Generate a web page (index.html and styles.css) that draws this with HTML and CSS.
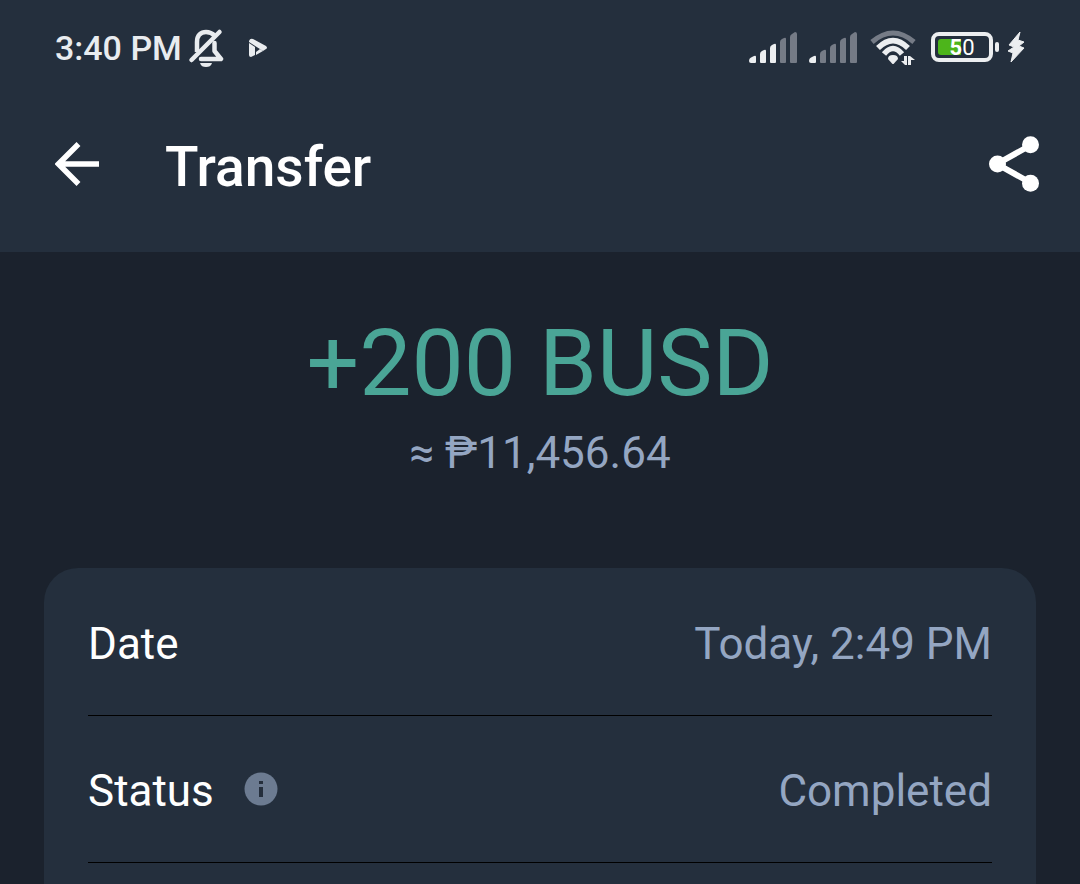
FILE: index.html
```html
<!DOCTYPE html>
<html lang="en">
<head>
<meta charset="utf-8">
<meta name="viewport" content="width=device-width, initial-scale=1">
<title>Transfer</title>
<link rel="stylesheet" href="styles.css">
</head>
<body>
<div class="status-bar">
  <div class="status-left">
    <span class="clock">3:40 PM</span>
    <svg class="icon-bell" width="36" height="40" viewBox="0 0 36 40" aria-hidden="true">
      <g fill="none" stroke="#e9ecef" stroke-width="4.500">
        <path d="M9 24V14C9 7 13 4 18 4C22 4 24 5 27 8"/>
        <path d="M26.500 15V23L33 31H13" stroke-linejoin="round" stroke-linecap="round"/>
        <path d="M3.500 32L31.500 4" stroke-linecap="round"/>
      </g>
      <path d="M12 35H24C23 38 21 39 18 39S13 38 12 35Z" fill="#e9ecef"/>
    </svg>
    <svg class="icon-play" width="18" height="22" viewBox="0 0 18 22" aria-hidden="true">
      <path d="M0 4Q1 1 4 2L17 9Q19 11 17 12L14 14L0 5Z" fill="#e9ecef"/>
      <path d="M0 6L6 10V18L2 20Q0 20 0 18Z" fill="#e9ecef"/>
      <path d="M7 15L11 12L14 14L7 18Z" fill="#e9ecef"/>
    </svg>
  </div>
  <div class="status-right">
    <svg width="48" height="32" viewBox="0 0 48 32" aria-hidden="true">
      <g fill="#eceef0">
        <path d="M0 29Q0 26 3 25L5 24Q7 23 7 25V30Q7 31 6 31H2Q0 31 0 29Z"/>
        <path d="M11 22Q11 20 13 19L15 18Q17 17 17 19V30Q17 31 16 31H12Q11 31 11 30Z"/>
        <path d="M21 16Q21 14 23 13L25 12Q27 11 27 13V30Q27 31 26 31H22Q21 31 21 30Z"/>
      </g>
      <g fill="#757b86">
        <path d="M31 10Q31 8 33 7L35 6Q37 5 37 7V30Q37 31 36 31H32Q31 31 31 30Z"/>
        <path d="M41 5Q41 3 43 2L46 0Q48 0 48 2V30Q48 31 47 31H42Q41 31 41 30Z"/>
      </g>
    </svg>
    <svg width="48" height="32" viewBox="0 0 48 32" aria-hidden="true">
      <path fill="#eceef0" d="M0 29Q0 26 3 25L5 24Q7 23 7 25V30Q7 31 6 31H2Q0 31 0 29Z"/>
      <g fill="#757b86">
        <path d="M11 22Q11 20 13 19L15 18Q17 17 17 19V30Q17 31 16 31H12Q11 31 11 30Z"/>
        <path d="M21 16Q21 14 23 13L25 12Q27 11 27 13V30Q27 31 26 31H22Q21 31 21 30Z"/>
        <path d="M31 10Q31 8 33 7L35 6Q37 5 37 7V30Q37 31 36 31H32Q31 31 31 30Z"/>
        <path d="M41 5Q41 3 43 2L46 0Q48 0 48 2V30Q48 31 47 31H42Q41 31 41 30Z"/>
      </g>
    </svg>
    <svg class="icon-wifi" width="46" height="36" viewBox="0 0 46 36" aria-hidden="true">
      <g fill="none" stroke-width="5">
        <path d="M2 12Q23 -6 44 12" stroke="#757b86"/>
        <path d="M8 18Q23 3 38 18" stroke="#eceef0" stroke-width="5.500"/>
        <path d="M14 24Q23 13 32 24" stroke="#eceef0" stroke-width="5.500"/>
      </g>
      <path d="M18 29Q18 25 23 25Q28 25 28 29L24 33.500Q23 34.500 22 33.500Z" fill="#eceef0"/>
      <path d="M34 26H37V35H35L31 31H34ZM38 35V26H40L45 30H41V35Z" fill="#eceef0"/>
    </svg>
    <svg class="icon-battery" width="68" height="32" viewBox="0 0 68 32" role="img" aria-label="Battery 50 percent">
      <rect x="2" y="2" width="58" height="26" rx="6" fill="none" stroke="#eceef0" stroke-width="4"/>
      <path d="M10 7H30V23H10Q7 23 7 20V10Q7 7 10 7Z" fill="#4db51b"/>
      <rect x="64" y="10" width="4" height="10" rx="2" fill="#eceef0"/>
      <text class="battery-text" x="31" y="23" text-anchor="middle"><tspan class="battery-strong">5</tspan>0</text>
    </svg>
    <svg class="icon-bolt" width="18" height="34" viewBox="0 0 18 34" aria-hidden="true">
      <path d="M13 1L2 14L7 16L1 20L6 22L4 31L17 17L12 15L17 11L11 9Z" fill="#eceef0" stroke="#eceef0" stroke-width="1" stroke-linejoin="round"/>
    </svg>
  </div>
</div>
<header class="app-bar">
  <button class="icon-button" type="button" aria-label="Back">
    <svg width="44" height="44" viewBox="0 0 44 44" aria-hidden="true">
      <path d="M44 22H5M23.500 2L3.500 22L23.500 42" fill="none" stroke="#fff" stroke-width="5.500"/>
    </svg>
  </button>
  <h1 class="title">Transfer</h1>
  <button class="icon-button" type="button" aria-label="Share">
    <svg width="50" height="56" viewBox="0 0 50 56" aria-hidden="true">
      <path d="M42 9L8 28L42 47" fill="none" stroke="#fff" stroke-width="6"/>
      <g fill="#fff"><circle cx="41.500" cy="8.700" r="8.500"/><circle cx="8.500" cy="28" r="8.500"/><circle cx="41.500" cy="47.300" r="8.500"/></g>
    </svg>
  </button>
</header>
<main class="content">
  <section class="summary">
    <p class="amount">+200 BUSD</p>
    <p class="fiat">≈ ₱11,456.64</p>
  </section>
  <dl class="card">
    <div class="row">
      <dt>Date</dt>
      <dd>Today, 2:49 PM</dd>
    </div>
    <div class="row">
      <dt>Status
        <button class="icon-button info" type="button" aria-label="About status">
          <svg width="34" height="34" viewBox="0 0 34 34" aria-hidden="true">
            <circle cx="17" cy="17" r="16.500" fill="#6c7b91"/>
            <path d="M15 9H19V12H15ZM15 15H19V25H15Z" fill="#242e3c"/>
          </svg>
        </button>
      </dt>
      <dd>Completed</dd>
    </div>
  </dl>
</main>
</body>
</html>
```
FILE: styles.css
```css
* {
  box-sizing: border-box;
}

body {
  margin: 0;
  min-height: 100vh;
  display: flex;
  flex-direction: column;
  background: #1b222d;
  color: #fff;
  font-family: Roboto, "Noto Sans", sans-serif;
}

svg {
  display: block;
  flex: none;
}

.status-bar {
  display: flex;
  align-items: center;
  justify-content: space-between;
  height: 96px;
  padding: 0 55px;
  background: #242f3d;
}

.status-left,
.status-right {
  display: flex;
  align-items: center;
}

.clock {
  color: #e9ecef;
  font-size: 34px;
  line-height: 40px;
  font-weight: 500;
}

.icon-bell {
  margin-left: 6px;
}

.icon-play {
  margin-left: 25px;
}

.status-right {
  gap: 12px;
}

.icon-wifi {
  margin-left: 1px;
}

.icon-battery {
  margin-left: 3px;
}

.icon-bolt {
  margin-left: -4px;
}

.battery-text {
  fill: #fff;
  font-size: 22px;
}

.battery-strong {
  font-weight: 700;
}

.app-bar {
  display: flex;
  align-items: center;
  height: 156px;
  padding: 0 41px 20px 55px;
  background: #242f3d;
}

.icon-button {
  flex: none;
  padding: 0;
  border: 0;
  background: none;
}

.title {
  flex: 1;
  margin: 0;
  padding: 6px 0 0 66px;
  font-size: 55px;
  line-height: 64px;
  font-weight: 500;
}

.content {
  flex: 1;
  display: flex;
  flex-direction: column;
  padding: 0 44px;
}

.summary {
  padding: 57px 0 88px;
  text-align: center;
}

.amount,
.fiat {
  margin: 0;
}

.amount {
  color: #4aa596;
  font-size: 93px;
  line-height: 110px;
}

.fiat {
  padding-top: 7px;
  color: #94a6c2;
  font-size: 44px;
  line-height: 54px;
}

.card {
  flex: 1;
  margin: 0;
  padding: 1px 44px 0;
  border-radius: 34px 34px 0 0;
  background: #242f3d;
  font-size: 44px;
  line-height: 54px;
}

.row {
  display: flex;
  align-items: center;
  justify-content: space-between;
  height: 147px;
  padding-top: 3px;
  border-bottom: 1px solid #000;
}

.row dt {
  display: flex;
  align-items: center;
  gap: 30px;
}

.row dd {
  margin: 0;
  color: #94a6c2;
}

.info {
  padding-bottom: 4px;
}
```
